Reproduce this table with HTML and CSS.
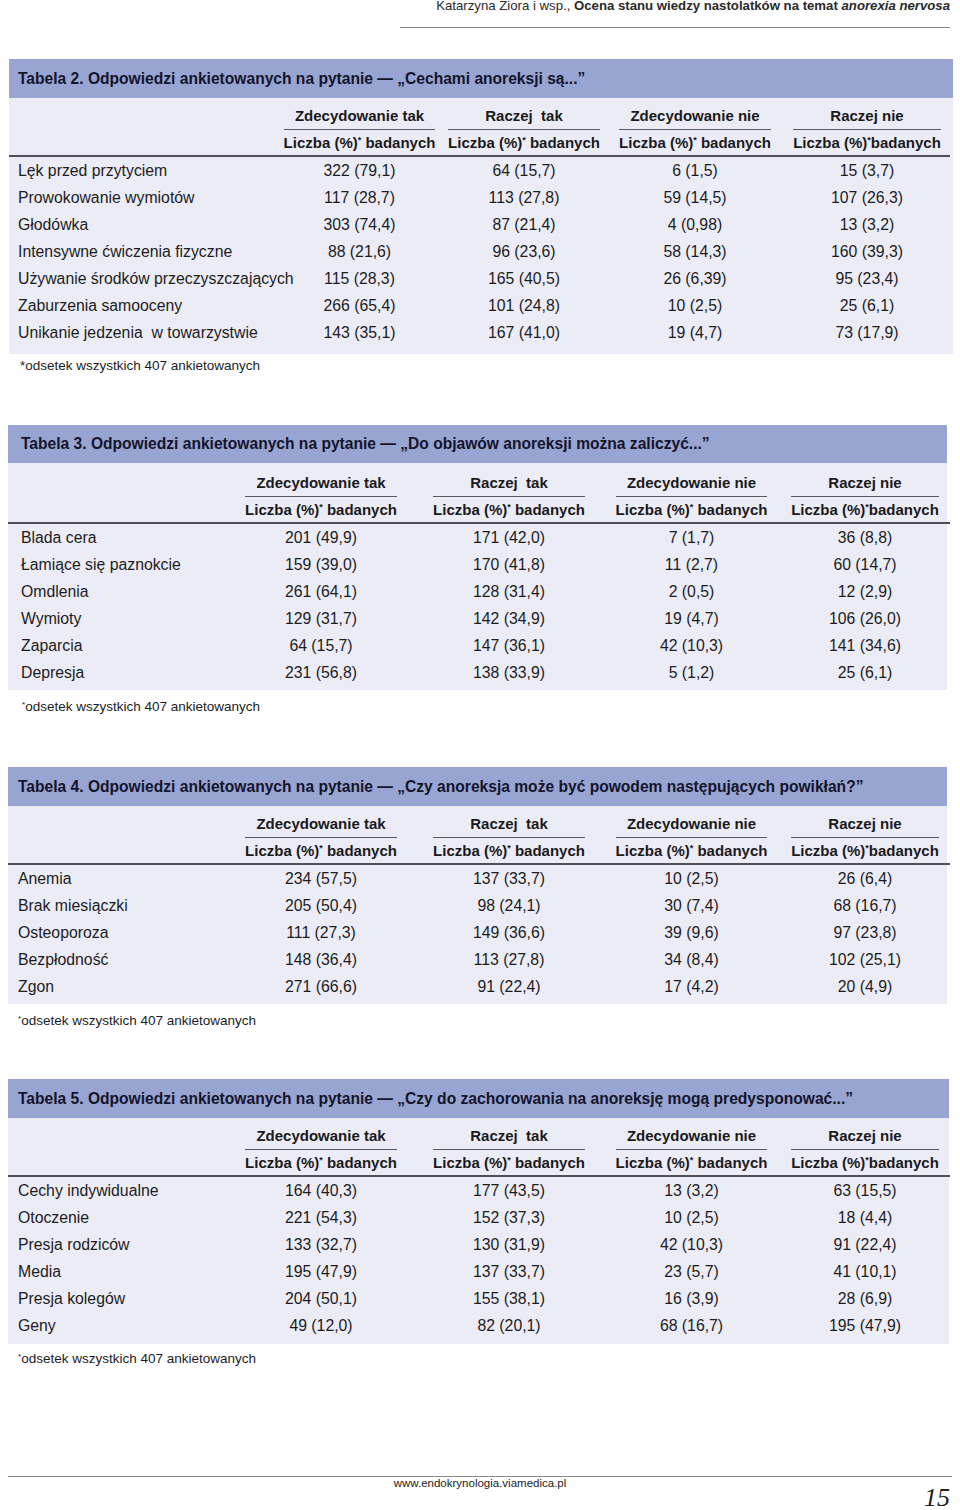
FILE: index.html
```html
<!DOCTYPE html>
<html lang="pl">
<head>
<meta charset="utf-8">
<title>Tabele</title>
<link rel="stylesheet" href="styles.css">
</head>
<body>
<div class="runhead">Katarzyna Ziora i wsp., <b>Ocena stanu wiedzy nastolatków na temat <i>anorexia nervosa</i></b></div>

<section class="tbl t2">
  <div class="ttl">Tabela 2. Odpowiedzi ankietowanych na pytanie — „Cechami anoreksji są...”</div>
  <div class="bd">
    <div class="grid">
      <div class="hc"></div>
      <div class="hc"><div class="grp"><div class="g1">Zdecydowanie tak</div><div class="g2">Liczba (%)<sup>*</sup> badanych</div></div></div>
      <div class="hc"><div class="grp"><div class="g1">Raczej&nbsp; tak</div><div class="g2">Liczba (%)<sup>*</sup> badanych</div></div></div>
      <div class="hc"><div class="grp"><div class="g1">Zdecydowanie nie</div><div class="g2">Liczba (%)<sup>*</sup> badanych</div></div></div>
      <div class="hc"><div class="grp"><div class="g1">Raczej nie</div><div class="g2">Liczba (%)<sup>*</sup>badanych</div></div></div>

      <div class="c lab">Lęk przed przytyciem</div><div class="c">322 (79,1)</div><div class="c">64 (15,7)</div><div class="c">6 (1,5)</div><div class="c">15 (3,7)</div>
      <div class="c lab">Prowokowanie wymiotów</div><div class="c">117 (28,7)</div><div class="c">113 (27,8)</div><div class="c">59 (14,5)</div><div class="c">107 (26,3)</div>
      <div class="c lab">Głodówka</div><div class="c">303 (74,4)</div><div class="c">87 (21,4)</div><div class="c">4 (0,98)</div><div class="c">13 (3,2)</div>
      <div class="c lab">Intensywne ćwiczenia fizyczne</div><div class="c">88 (21,6)</div><div class="c">96 (23,6)</div><div class="c">58 (14,3)</div><div class="c">160 (39,3)</div>
      <div class="c lab">Używanie środków przeczyszczających</div><div class="c">115 (28,3)</div><div class="c">165 (40,5)</div><div class="c">26 (6,39)</div><div class="c">95 (23,4)</div>
      <div class="c lab">Zaburzenia samooceny</div><div class="c">266 (65,4)</div><div class="c">101 (24,8)</div><div class="c">10 (2,5)</div><div class="c">25 (6,1)</div>
      <div class="c lab">Unikanie jedzenia&nbsp; w towarzystwie</div><div class="c">143 (35,1)</div><div class="c">167 (41,0)</div><div class="c">19 (4,7)</div><div class="c">73 (17,9)</div>
    </div>
  </div>
  <p class="note">*odsetek wszystkich 407 ankietowanych</p>
</section>

<section class="tbl t3">
  <div class="ttl">Tabela 3. Odpowiedzi ankietowanych na pytanie — „Do objawów anoreksji można zaliczyć...”</div>
  <div class="bd">
    <div class="grid">
      <div class="hc"></div>
      <div class="hc"><div class="grp"><div class="g1">Zdecydowanie tak</div><div class="g2">Liczba (%)<sup>*</sup> badanych</div></div></div>
      <div class="hc"><div class="grp"><div class="g1">Raczej&nbsp; tak</div><div class="g2">Liczba (%)<sup>*</sup> badanych</div></div></div>
      <div class="hc"><div class="grp"><div class="g1">Zdecydowanie nie</div><div class="g2">Liczba (%)<sup>*</sup> badanych</div></div></div>
      <div class="hc"><div class="grp"><div class="g1">Raczej nie</div><div class="g2">Liczba (%)<sup>*</sup>badanych</div></div></div>

      <div class="c lab">Blada cera</div><div class="c">201 (49,9)</div><div class="c">171 (42,0)</div><div class="c">7 (1,7)</div><div class="c">36 (8,8)</div>
      <div class="c lab">Łamiące się paznokcie</div><div class="c">159 (39,0)</div><div class="c">170 (41,8)</div><div class="c">11 (2,7)</div><div class="c">60 (14,7)</div>
      <div class="c lab">Omdlenia</div><div class="c">261 (64,1)</div><div class="c">128 (31,4)</div><div class="c">2 (0,5)</div><div class="c">12 (2,9)</div>
      <div class="c lab">Wymioty</div><div class="c">129 (31,7)</div><div class="c">142 (34,9)</div><div class="c">19 (4,7)</div><div class="c">106 (26,0)</div>
      <div class="c lab">Zaparcia</div><div class="c">64 (15,7)</div><div class="c">147 (36,1)</div><div class="c">42 (10,3)</div><div class="c">141 (34,6)</div>
      <div class="c lab">Depresja</div><div class="c">231 (56,8)</div><div class="c">138 (33,9)</div><div class="c">5 (1,2)</div><div class="c">25 (6,1)</div>
    </div>
  </div>
  <p class="note"><sup>*</sup>odsetek wszystkich 407 ankietowanych</p>
</section>

<section class="tbl t4">
  <div class="ttl">Tabela 4. Odpowiedzi ankietowanych na pytanie — „Czy anoreksja może być powodem następujących powikłań?”</div>
  <div class="bd">
    <div class="grid">
      <div class="hc"></div>
      <div class="hc"><div class="grp"><div class="g1">Zdecydowanie tak</div><div class="g2">Liczba (%)<sup>*</sup> badanych</div></div></div>
      <div class="hc"><div class="grp"><div class="g1">Raczej&nbsp; tak</div><div class="g2">Liczba (%)<sup>*</sup> badanych</div></div></div>
      <div class="hc"><div class="grp"><div class="g1">Zdecydowanie nie</div><div class="g2">Liczba (%)<sup>*</sup> badanych</div></div></div>
      <div class="hc"><div class="grp"><div class="g1">Raczej nie</div><div class="g2">Liczba (%)<sup>*</sup>badanych</div></div></div>

      <div class="c lab">Anemia</div><div class="c">234 (57,5)</div><div class="c">137 (33,7)</div><div class="c">10 (2,5)</div><div class="c">26 (6,4)</div>
      <div class="c lab">Brak miesiączki</div><div class="c">205 (50,4)</div><div class="c">98 (24,1)</div><div class="c">30 (7,4)</div><div class="c">68 (16,7)</div>
      <div class="c lab">Osteoporoza</div><div class="c">111 (27,3)</div><div class="c">149 (36,6)</div><div class="c">39 (9,6)</div><div class="c">97 (23,8)</div>
      <div class="c lab">Bezpłodność</div><div class="c">148 (36,4)</div><div class="c">113 (27,8)</div><div class="c">34 (8,4)</div><div class="c">102 (25,1)</div>
      <div class="c lab">Zgon</div><div class="c">271 (66,6)</div><div class="c">91 (22,4)</div><div class="c">17 (4,2)</div><div class="c">20 (4,9)</div>
    </div>
  </div>
  <p class="note"><sup>*</sup>odsetek wszystkich 407 ankietowanych</p>
</section>

<section class="tbl t5">
  <div class="ttl">Tabela 5. Odpowiedzi ankietowanych na pytanie — „Czy do zachorowania na anoreksję mogą predysponować...”</div>
  <div class="bd">
    <div class="grid">
      <div class="hc"></div>
      <div class="hc"><div class="grp"><div class="g1">Zdecydowanie tak</div><div class="g2">Liczba (%)<sup>*</sup> badanych</div></div></div>
      <div class="hc"><div class="grp"><div class="g1">Raczej&nbsp; tak</div><div class="g2">Liczba (%)<sup>*</sup> badanych</div></div></div>
      <div class="hc"><div class="grp"><div class="g1">Zdecydowanie nie</div><div class="g2">Liczba (%)<sup>*</sup> badanych</div></div></div>
      <div class="hc"><div class="grp"><div class="g1">Raczej nie</div><div class="g2">Liczba (%)<sup>*</sup>badanych</div></div></div>

      <div class="c lab">Cechy indywidualne</div><div class="c">164 (40,3)</div><div class="c">177 (43,5)</div><div class="c">13 (3,2)</div><div class="c">63 (15,5)</div>
      <div class="c lab">Otoczenie</div><div class="c">221 (54,3)</div><div class="c">152 (37,3)</div><div class="c">10 (2,5)</div><div class="c">18 (4,4)</div>
      <div class="c lab">Presja rodziców</div><div class="c">133 (32,7)</div><div class="c">130 (31,9)</div><div class="c">42 (10,3)</div><div class="c">91 (22,4)</div>
      <div class="c lab">Media</div><div class="c">195 (47,9)</div><div class="c">137 (33,7)</div><div class="c">23 (5,7)</div><div class="c">41 (10,1)</div>
      <div class="c lab">Presja kolegów</div><div class="c">204 (50,1)</div><div class="c">155 (38,1)</div><div class="c">16 (3,9)</div><div class="c">28 (6,9)</div>
      <div class="c lab">Geny</div><div class="c">49 (12,0)</div><div class="c">82 (20,1)</div><div class="c">68 (16,7)</div><div class="c">195 (47,9)</div>
    </div>
  </div>
  <p class="note"><sup>*</sup>odsetek wszystkich 407 ankietowanych</p>
</section>

<footer class="foot">
  <div class="url">www.endokrynologia.viamedica.pl</div>
  <div class="pnum">15</div>
</footer>
</body>
</html>
```

FILE: styles.css
```css
html, body {
  margin: 0;
  padding: 0;
  background: #ffffff;
}
body {
  width: 960px;
  font-family: "Liberation Sans", Arial, Helvetica, sans-serif;
  color: #1c1c1e;
}

.runhead {
  margin-left: 400px;
  width: 550px;
  height: 27px;
  border-bottom: 1px solid #8c8c8c;
  text-align: right;
  font-size: 13.2px;
  line-height: 12px;
  color: #2a2a2a;
}
.runhead b { font-weight: bold; }

.tbl { margin-left: 8px; width: 939px; }
.t2 { margin-left: 9px; width: 944px; margin-top: 31px; }
.t3 { margin-left: 8px; width: 939px; margin-top: 49px; }
.t4 { margin-top: 50px; }
.t5 { margin-top: 48px; width: 941px; }

.ttl {
  height: 39px;
  background: #98a4d2;
  font-weight: bold;
  font-size: 15.6px;
  line-height: 39px;
  padding-left: 9px;
  color: #14152b;
  white-space: nowrap;
}
.t3 .ttl { padding-left: 13px; height: 38px; line-height: 38px; }
.t4 .ttl, .t5 .ttl { padding-left: 10px; }

.bd {
  background: #ececf6;
  padding: 5px 0 8px;
}
.t3 .bd { padding: 7px 0 4px; }
.t4 .bd { padding: 5px 0 4px; }
.t5 .bd { padding: 5px 0 5px; }

.grid { display: grid; }
.t2 .grid { grid-template-columns: 268px 165px 164px 178px 166px; }
.t3 .grid, .t4 .grid, .t5 .grid { grid-template-columns: 219px 188px 188px 177px 170px; }

.hc {
  height: 54px;
  box-sizing: border-box;
  border-bottom: 2px solid #4f4f55;
  display: flex;
  justify-content: center;
  font-weight: bold;
  font-size: 15px;
  color: #1a1a1c;
}
.grp {
  display: flex;
  flex-direction: column;
}
.g1 {
  height: 27px;
  box-sizing: border-box;
  border-bottom: 1px solid #5a5a5e;
  text-align: center;
  line-height: 26px;
  white-space: nowrap;
}
.g2 {
  height: 25px;
  line-height: 25px;
  white-space: nowrap;
}
sup {
  font-size: 0.6em;
  line-height: 0;
  vertical-align: 0.55em;
}

.c {
  height: 27px;
  line-height: 27px;
  text-align: center;
  font-size: 15.8px;
  white-space: nowrap;
}
.c.lab { text-align: left; padding-left: 9px; }
.t3 .c.lab { padding-left: 13px; }
.t4 .c.lab, .t5 .c.lab { padding-left: 10px; }

.note {
  margin: 2px 0 0;
  padding-left: 11px;
  font-size: 13.5px;
  line-height: 20px;
  color: #1c1c1e;
}
.t3 .note { margin-top: 7px; padding-left: 14px; }
.t4 .note { margin-top: 7px; padding-left: 10px; }
.t5 .note { margin-top: 5px; padding-left: 10px; }

.foot {
  margin: 107px 8px 0;
  width: 944px;
  border-top: 1px solid #8c8c8c;
  display: grid;
  grid-template-columns: 1fr auto 1fr;
  height: 34px;
}
.url {
  grid-column: 2;
  font-size: 11.5px;
  line-height: 13px;
  color: #222;
}
.pnum {
  grid-column: 3;
  justify-self: end;
  padding-top: 9px;
  padding-right: 2px;
  font-family: "Liberation Serif", "Times New Roman", serif;
  font-style: italic;
  font-size: 26px;
  line-height: 24px;
  color: #222;
}
```
